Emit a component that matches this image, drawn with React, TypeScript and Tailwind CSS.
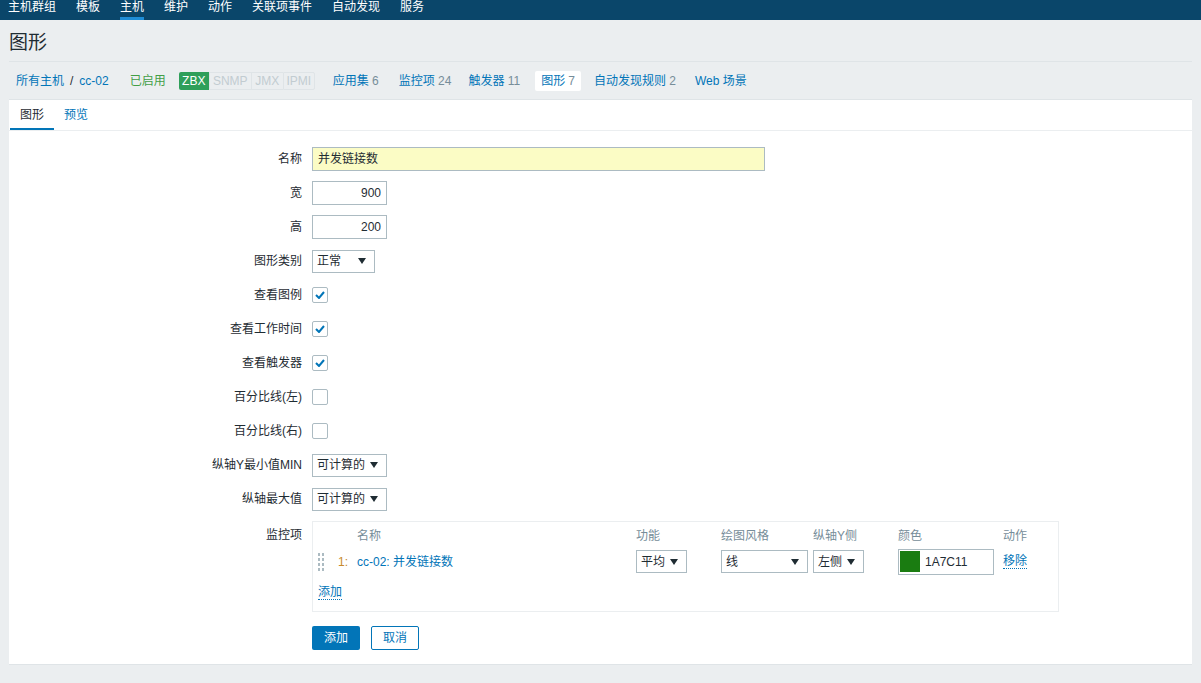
import React from "react";

const F = { fontFamily: '"Liberation Sans", Arial, "Noto Sans CJK SC", sans-serif' };

function Arrow() {
  return (
    <svg width="8" height="6" viewBox="0 0 8 6" className="shrink-0">
      <path d="M0 0 L8 0 L4 6 Z" fill="#1f2c33" />
    </svg>
  );
}

function Select({ label, w }: { label: string; w: string }) {
  return (
    <div className={`flex h-[23px] ${w} items-center justify-between border border-[#acbbc2] bg-white pl-[4px] pr-[8px] text-[12px] text-[#1f2c33]`}>
      <span>{label}</span>
      <Arrow />
    </div>
  );
}

function Check({ on }: { on: boolean }) {
  return (
    <div className="flex h-[16px] w-[16px] items-center justify-center rounded-[2px] border border-[#acbbc2] bg-white">
      {on && (
        <svg width="10" height="8" viewBox="0 0 10 8">
          <path d="M1 4 L4 7 L9 1" fill="none" stroke="#0275b8" strokeWidth="2" />
        </svg>
      )}
    </div>
  );
}

function Row({ label, children }: { label: string; children: React.ReactNode }) {
  return (
    <div className="flex h-[34px] items-center">
      <div className="w-[303px] pr-[10px] text-right text-[12px] text-[#1f2c33]">{label}</div>
      <div className="flex items-center">{children}</div>
    </div>
  );
}

export default function App() {
  const nav = ["主机群组", "模板", "主机", "维护", "动作", "关联项事件", "自动发现", "服务"];
  return (
    <div style={F} className="min-h-[683px] w-[1201px] overflow-hidden bg-[#ebeef0] text-[12px] text-[#1f2c33]">
      <div className="flex h-[20px] bg-[#0a466a] pl-[8px]">
        {nav.map((n, i) => (
          <div key={n} className="relative mr-[20px] h-[20px] pt-[1px] text-[12px] leading-[12px] text-white">
            {n}
            {i === 2 && <div className="absolute bottom-0 left-0 right-0 h-[3px] bg-[#1f8dd6]" />}
          </div>
        ))}
      </div>
      <div className="px-[9px]">
        <div className="flex h-[42px] items-center border-b border-[#dfe4e7] pt-[5px] text-[19px] text-[#1f2c33]">图形</div>
        <div className="flex h-[38px] items-center border-b border-[#dfe4e7] pl-[7px] text-[12px]">
          <span className="text-[#0275b8]">所有主机</span>
          <span className="mx-[6px] text-[#1f2c33]">/</span>
          <span className="text-[#0275b8]">cc-02</span>
          <span className="ml-[21px] text-[#429e47]">已启用</span>
          <div className="ml-[13px] flex h-[18px] text-[12px]">
            <span className="flex w-[30px] items-center justify-center rounded-l-[2px] bg-[#2f9f5a] text-white">ZBX</span>
            <span className="flex w-[43px] items-center justify-center border border-[#dfe4e7] text-[#c2ccd1]">SNMP</span>
            <span className="flex w-[31px] items-center justify-center border-y border-[#dfe4e7] text-[#c2ccd1]">JMX</span>
            <span className="flex w-[32px] items-center justify-center rounded-r-[2px] border border-[#dfe4e7] text-[#c2ccd1]">IPMI</span>
          </div>
          <span className="ml-[18px] text-[#0275b8]">应用集 <span className="text-[#768d99]">6</span></span>
          <span className="ml-[20px] text-[#0275b8]">监控项 <span className="text-[#768d99]">24</span></span>
          <span className="ml-[17px] text-[#0275b8]">触发器 <span className="text-[#768d99]">11</span></span>
          <span className="ml-[15px] flex h-[20px] items-center rounded-[2px] bg-white px-[6px] text-[#0275b8]">图形 <span className="ml-[3px] text-[#768d99]">7</span></span>
          <span className="ml-[13px] text-[#0275b8]">自动发现规则 <span className="text-[#768d99]">2</span></span>
          <span className="ml-[19px] text-[#0275b8]">Web 场景</span>
        </div>
        <div className="h-[565px] border-b border-[#dfe4e7] bg-white">
          <div className="flex h-[31px] items-end border-b border-[#ebeef0]">
            <div className="ml-[1px] flex h-[29px] w-[44px] items-center justify-center border-b-[2px] border-[#0275b8] text-[#1f2c33]">图形</div>
            <div className="ml-[10px] flex h-[29px] items-center pb-[2px] text-[#0275b8]">预览</div>
          </div>
          <div className="pt-[11px]">
            <Row label="名称">
              <div className="flex h-[24px] w-[453px] items-center border border-[#acbbc2] bg-[#fbfcc5] px-[5px]">并发链接数</div>
            </Row>
            <Row label="宽">
              <div className="flex h-[24px] w-[75px] items-center justify-end border border-[#acbbc2] px-[5px]">900</div>
            </Row>
            <Row label="高">
              <div className="flex h-[24px] w-[75px] items-center justify-end border border-[#acbbc2] px-[5px]">200</div>
            </Row>
            <Row label="图形类别">
              <Select label="正常" w="w-[63px]" />
            </Row>
            <Row label="查看图例"><Check on /></Row>
            <Row label="查看工作时间"><Check on /></Row>
            <Row label="查看触发器"><Check on /></Row>
            <Row label="百分比线(左)"><Check on={false} /></Row>
            <Row label="百分比线(右)"><Check on={false} /></Row>
            <Row label="纵轴Y最小值MIN"><Select label="可计算的" w="w-[75px]" /></Row>
            <Row label="纵轴最大值"><Select label="可计算的" w="w-[75px]" /></Row>
            <div className="mt-[5px] flex">
              <div className="w-[303px] pr-[10px] pt-[5px] text-right">监控项</div>
              <div className="h-[91px] w-[747px] border border-[#ebeef0] px-[5px] pt-[5px]">
                <div className="flex text-[#768d99]">
                  <div className="w-[318px] pl-[39px]">名称</div>
                  <div className="w-[85px]">功能</div>
                  <div className="w-[92px]">绘图风格</div>
                  <div className="w-[85px]">纵轴Y侧</div>
                  <div className="w-[105px]">颜色</div>
                  <div>动作</div>
                </div>
                <div className="mt-[3px] flex h-[27px] items-center">
                  <svg width="7" height="18" viewBox="0 0 7 18" className="shrink-0">
                    {[0, 5, 10, 15].map((y) => (
                      <React.Fragment key={y}>
                        <rect x="0" y={y} width="2" height="3" fill="#acbbc2" />
                        <rect x="4" y={y} width="2" height="3" fill="#acbbc2" />
                      </React.Fragment>
                    ))}
                  </svg>
                  <span className="ml-[13px] w-[19px] text-[#c78a2d]">1:</span>
                  <span className="w-[279px] text-[#0275b8]">cc-02: 并发链接数</span>
                  <div className="w-[85px]"><Select label="平均" w="w-[51px]" /></div>
                  <div className="w-[92px]"><Select label="线" w="w-[87px]" /></div>
                  <div className="w-[85px]"><Select label="左侧" w="w-[51px]" /></div>
                  <div className="w-[105px]">
                    <div className="flex h-[26px] w-[96px] items-center border border-[#acbbc2] pl-[1px]">
                      <div className="h-[21px] w-[20px] bg-[#1a7c11]" />
                      <span className="ml-[5px]">1A7C11</span>
                    </div>
                  </div>
                  <span className="border-b border-dotted border-[#0275b8] leading-[14px] text-[#0275b8]">移除</span>
                </div>
                <div className="mt-[8px]">
                  <span className="border-b border-dotted border-[#0275b8] text-[#0275b8]">添加</span>
                </div>
              </div>
            </div>
            <div className="ml-[303px] mt-[14px] flex gap-[11px]">
              <div className="flex h-[24px] w-[48px] items-center justify-center rounded-[2px] bg-[#0275b8] text-white">添加</div>
              <div className="flex h-[24px] w-[48px] items-center justify-center rounded-[2px] border border-[#0275b8] text-[#0275b8]">取消</div>
            </div>
          </div>
        </div>
      </div>
    </div>
  );
}
